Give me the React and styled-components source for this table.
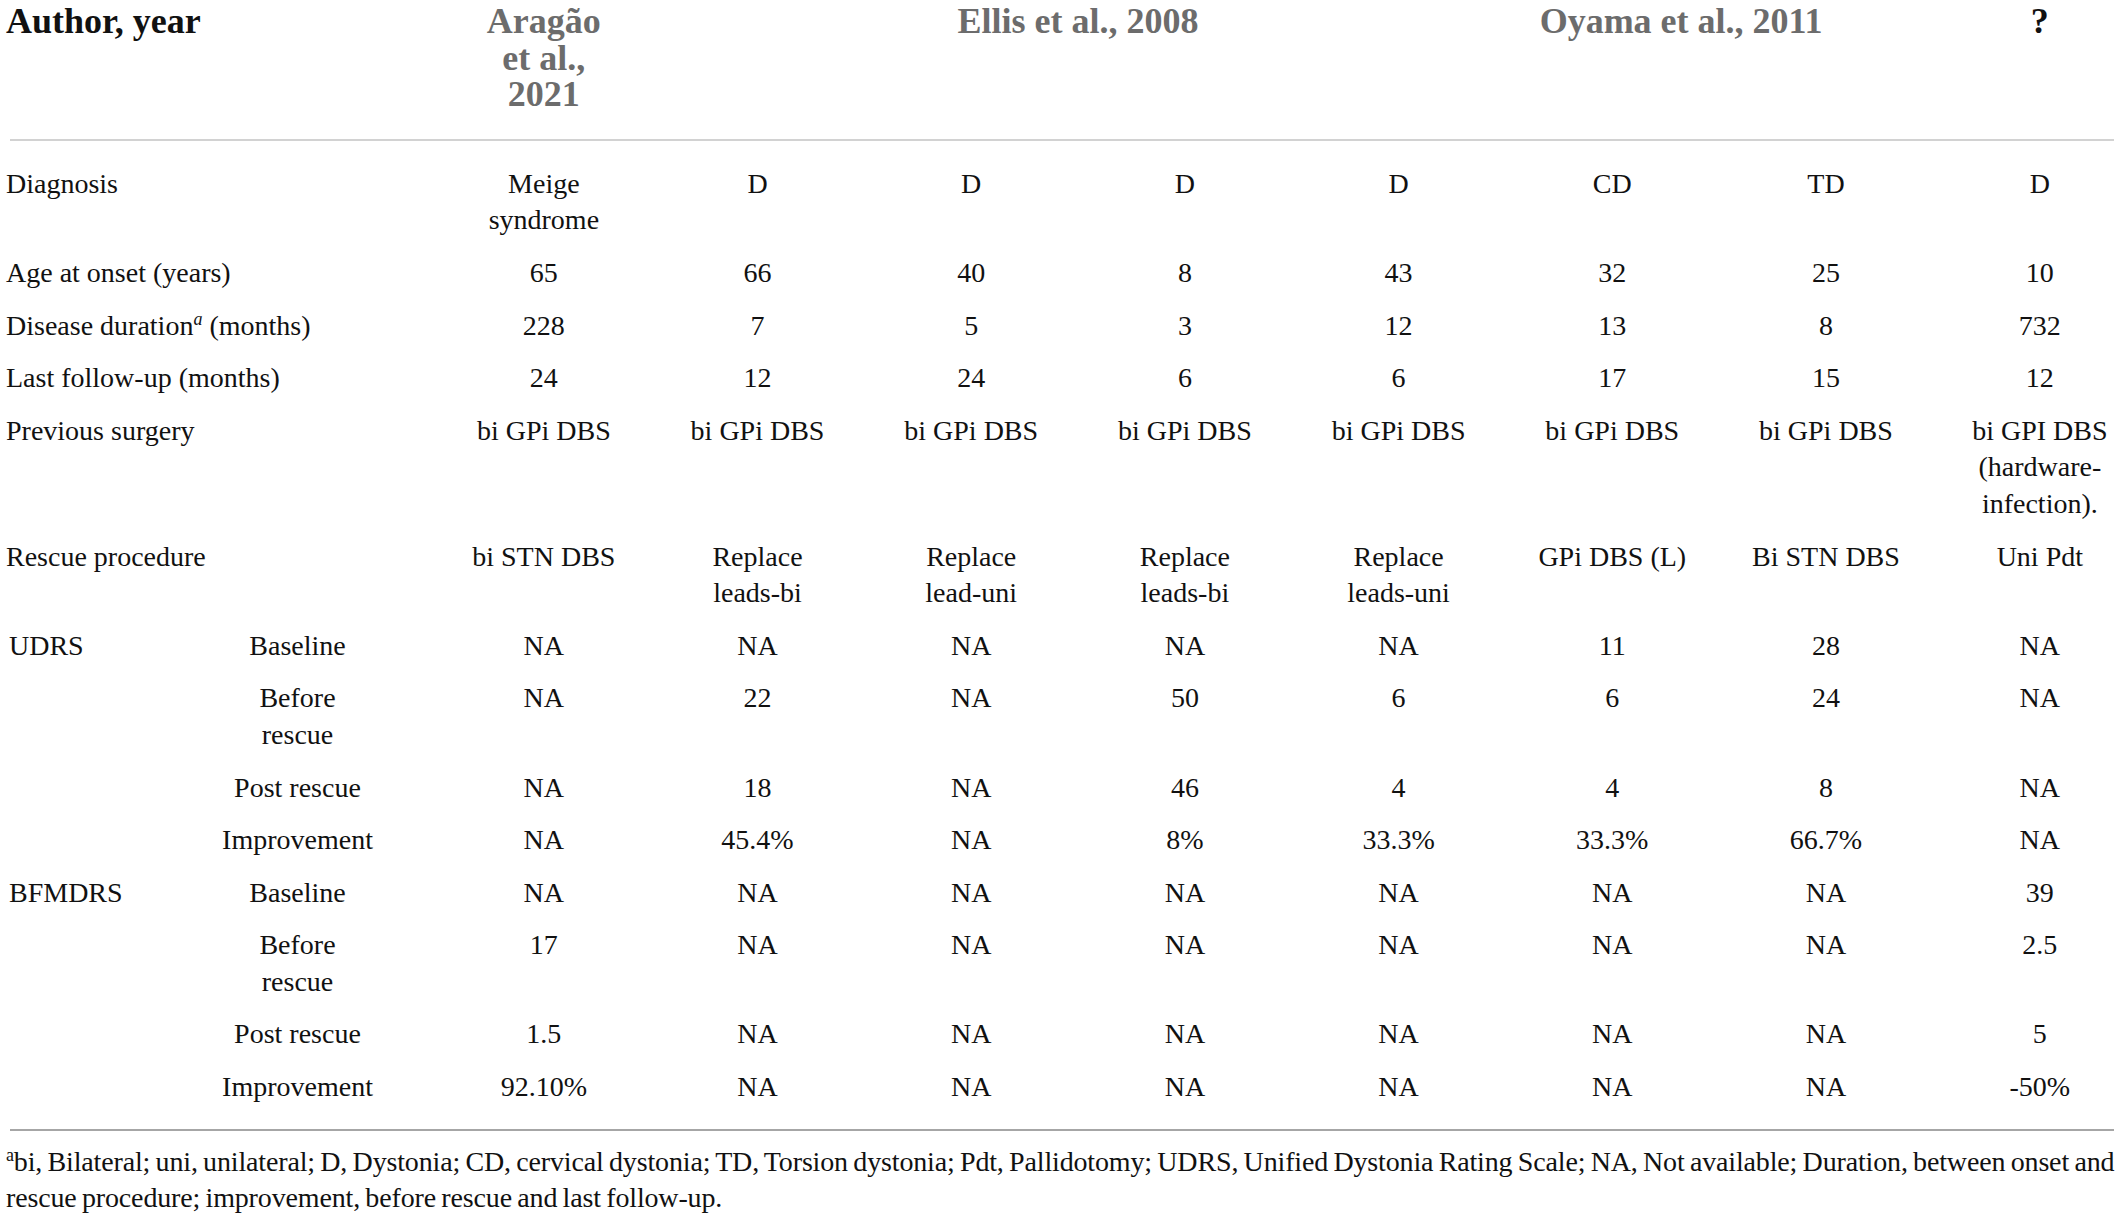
import React from "react";
import styled, { createGlobalStyle } from "styled-components";

const GlobalStyle = createGlobalStyle`
  html, body {
    margin: 0;
    padding: 0;
    background: #fff;
  }
  body {
    font-family: "Liberation Serif", "Times New Roman", serif;
    color: #111;
    overflow: hidden;
  }
`;

const COLS = "158px 279px repeat(7, 213.7px) 188px";

const Page = styled.div`
  width: 2121px;
`;

const Grid = styled.div`
  display: grid;
  grid-template-columns: ${COLS};
  font-size: 28px;
  line-height: 36.6px;
`;

const HeadGrid = styled(Grid)`
  padding: 3px 0 26px;
`;

const BodyGrid = styled(Grid)`
  padding: 17px 0 15px;
`;

const HeadCell = styled.div`
  grid-column: ${(p) => p.$span};
  font-size: 36px;
  font-weight: bold;
  line-height: 36.6px;
  color: ${(p) => (p.$muted ? "#6c6c6c" : "#111")};
  text-align: ${(p) => (p.$left ? "left" : "center")};
  padding-left: ${(p) => (p.$left ? "6px" : p.$last ? "26px" : "0")};
  padding-right: ${(p) => p.$shift || "0"};
`;

const Rule = styled.div`
  margin: 0 7px 0 9.5px;
  height: 2px;
  background: ${(p) => (p.$dark ? "#a6a6a6" : "#d2d2d2")};
`;

const Label = styled.div`
  grid-column: 1 / 3;
  padding: 8px 0 8px 6px;
  white-space: nowrap;
`;

const Group = styled.div`
  grid-column: 1;
  padding: 8px 0 8px 9px;
`;

const Sub = styled.div`
  grid-column: 2;
  padding: 8px 0;
  text-align: center;
`;

const Cell = styled.div`
  padding: 8px 0 8px ${(p) => (p.$last ? "26px" : "0")};
  text-align: center;
  white-space: nowrap;
`;

const Sup = styled.sup`
  font-size: 18px;
  font-style: ${(p) => (p.$italic ? "italic" : "normal")};
  line-height: 0;
  vertical-align: 10px;
`;

const Footnote = styled.div`
  padding: 13px 0 0 6px;
  font-size: 28px;
  line-height: 36.6px;
  letter-spacing: -0.15px;
  word-spacing: -1.5px;
  white-space: nowrap;
`;

const Lines = ({ value }) =>
  Array.isArray(value)
    ? value.map((line, i) => (
        <React.Fragment key={i}>
          {i > 0 && <br />}
          {line}
        </React.Fragment>
      ))
    : value;

const mainRows = [
  { label: "Diagnosis", cells: [["Meige", "syndrome"], "D", "D", "D", "D", "CD", "TD", "D"] },
  { label: "Age at onset (years)", cells: ["65", "66", "40", "8", "43", "32", "25", "10"] },
  {
    label: (
      <>
        Disease duration<Sup $italic>a</Sup> (months)
      </>
    ),
    cells: ["228", "7", "5", "3", "12", "13", "8", "732"],
  },
  { label: "Last follow-up (months)", cells: ["24", "12", "24", "6", "6", "17", "15", "12"] },
  {
    label: "Previous surgery",
    cells: [
      "bi GPi DBS",
      "bi GPi DBS",
      "bi GPi DBS",
      "bi GPi DBS",
      "bi GPi DBS",
      "bi GPi DBS",
      "bi GPi DBS",
      ["bi GPI DBS", "(hardware-", "infection)."],
    ],
  },
  {
    label: "Rescue procedure",
    cells: [
      "bi STN DBS",
      ["Replace", "leads-bi"],
      ["Replace", "lead-uni"],
      ["Replace", "leads-bi"],
      ["Replace", "leads-uni"],
      "GPi DBS (L)",
      "Bi STN DBS",
      "Uni Pdt",
    ],
  },
];

const groups = [
  {
    name: "UDRS",
    rows: [
      { sub: "Baseline", cells: ["NA", "NA", "NA", "NA", "NA", "11", "28", "NA"] },
      { sub: ["Before", "rescue"], cells: ["NA", "22", "NA", "50", "6", "6", "24", "NA"] },
      { sub: "Post rescue", cells: ["NA", "18", "NA", "46", "4", "4", "8", "NA"] },
      { sub: "Improvement", cells: ["NA", "45.4%", "NA", "8%", "33.3%", "33.3%", "66.7%", "NA"] },
    ],
  },
  {
    name: "BFMDRS",
    rows: [
      { sub: "Baseline", cells: ["NA", "NA", "NA", "NA", "NA", "NA", "NA", "39"] },
      { sub: ["Before", "rescue"], cells: ["17", "NA", "NA", "NA", "NA", "NA", "NA", "2.5"] },
      { sub: "Post rescue", cells: ["1.5", "NA", "NA", "NA", "NA", "NA", "NA", "5"] },
      { sub: "Improvement", cells: ["92.10%", "NA", "NA", "NA", "NA", "NA", "NA", "-50%"] },
    ],
  },
];

const DataCells = ({ cells }) =>
  cells.map((c, i) => (
    <Cell key={i} $last={i === cells.length - 1}>
      <Lines value={c} />
    </Cell>
  ));

export default function App() {
  return (
    <Page>
      <GlobalStyle />
      <HeadGrid>
        <HeadCell $span="1 / 3" $left>
          Author, year
        </HeadCell>
        <HeadCell $span="3" $muted>
          Aragão
          <br />
          et al.,
          <br />
          2021
        </HeadCell>
        <HeadCell $span="4 / 8" $muted>
          Ellis et al., 2008
        </HeadCell>
        <HeadCell $span="8 / 10" $muted $shift="76px">
          Oyama et al., 2011
        </HeadCell>
        <HeadCell $span="10" $last>
          ?
        </HeadCell>
      </HeadGrid>
      <Rule />
      <BodyGrid>
        {mainRows.map((r, i) => (
          <React.Fragment key={i}>
            <Label>{r.label}</Label>
            <DataCells cells={r.cells} />
          </React.Fragment>
        ))}
        {groups.map((g) =>
          g.rows.map((r, j) => (
            <React.Fragment key={g.name + j}>
              <Group>{j === 0 ? g.name : ""}</Group>
              <Sub>
                <Lines value={r.sub} />
              </Sub>
              <DataCells cells={r.cells} />
            </React.Fragment>
          ))
        )}
      </BodyGrid>
      <Rule $dark />
      <Footnote>
        <Sup>a</Sup>bi, Bilateral; uni, unilateral; D, Dystonia; CD, cervical dystonia; TD, Torsion dystonia; Pdt,
        Pallidotomy; UDRS, Unified Dystonia Rating Scale; NA, Not available; Duration, between onset and
        <br />
        rescue procedure; improvement, before rescue and last follow-up.
      </Footnote>
    </Page>
  );
}
